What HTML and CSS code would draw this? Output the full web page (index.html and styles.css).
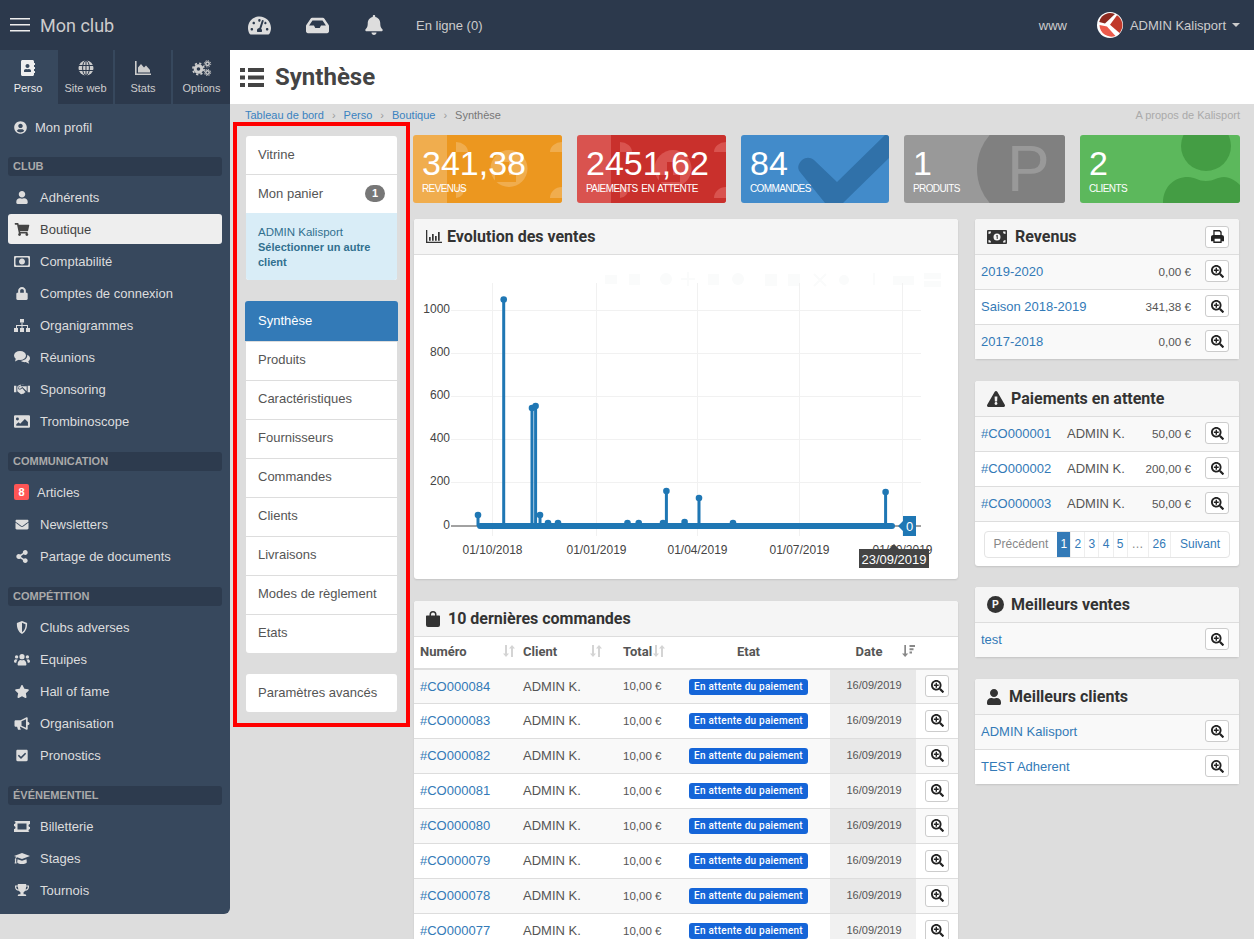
FILE: index.html
```html
<!doctype html>
<html lang="fr">
<head>
	<meta charset="utf-8">
	<title>Synthèse - Mon club</title>
	<link rel="stylesheet" href="styles.css">
</head>
<body>
	<svg class="sprite" aria-hidden="true">
		<symbol id="i-list" viewBox="0 0 24 19"><path d="M0 0h5v4H0zM8 0h16v4H8zM0 7.500h5v4H0zM8 7.500h16v4H8zM0 15h5v4H0zM8 15h16v4H8z"/></symbol>
		<symbol id="i-gauge" viewBox="0 0 576 512"><path d="M288 32C128.94 32 0 160.94 0 320c0 52.8 14.25 102.26 39.06 144.8 5.61 9.62 16.3 15.2 27.44 15.2h443c11.14 0 21.83-5.58 27.44-15.2C561.75 422.26 576 372.8 576 320c0-159.06-128.94-288-288-288zm0 64c14.71 0 26.58 10.13 30.32 23.65-1.11 2.26-2.64 4.23-3.45 6.67l-9.22 27.67c-5.13 3.49-10.97 6.01-17.64 6.01-17.67 0-32-14.33-32-32S270.33 96 288 96zM96 384c-17.67 0-32-14.33-32-32s14.33-32 32-32 32 14.33 32 32-14.33 32-32 32zm48-160c-17.67 0-32-14.33-32-32s14.33-32 32-32 32 14.33 32 32-14.33 32-32 32zm246.77-72.41l-61.33 184C343.13 347.33 352 364.54 352 384c0 11.72-3.38 22.55-8.88 32H232.88c-5.5-9.45-8.88-20.28-8.88-32 0-33.94 26.5-61.43 59.9-63.59l61.34-184.01c4.17-12.56 17.73-19.45 30.36-15.17 12.57 4.19 19.35 17.79 15.17 30.36zm14.66 57.2l15.52-46.55c3.47-1.29 7.13-2.23 11.05-2.23 17.67 0 32 14.33 32 32s-14.33 32-32 32c-11.38-.01-20.89-6.28-26.57-15.22zM480 384c-17.67 0-32-14.33-32-32s14.33-32 32-32 32 14.33 32 32-14.33 32-32 32z"/></symbol>
		<symbol id="i-inbox" viewBox="0 0 576 512"><path d="M567.938 243.908L462.25 85.374A48.003 48.003 0 0 0 422.311 64H153.689a48 48 0 0 0-39.938 21.374L8.062 243.908A47.994 47.994 0 0 0 0 270.533V400c0 26.51 21.49 48 48 48h480c26.51 0 48-21.49 48-48V270.533a47.994 47.994 0 0 0-8.062-26.625zM162.252 128h251.497l85.333 128H376l-32 64H232l-32-64H76.918l85.334-128z"/></symbol>
		<symbol id="i-bell" viewBox="0 0 448 512"><path d="M224 512c35.32 0 63.97-28.65 63.97-64H160.03c0 35.35 28.65 64 63.97 64zm215.39-149.71c-19.32-20.76-55.47-51.99-55.47-154.29 0-77.7-54.48-139.9-127.94-155.16V32c0-17.67-14.32-32-31.98-32s-31.98 14.33-31.98 32v20.84C118.56 68.1 64.08 130.3 64.08 208c0 102.3-36.15 133.53-55.47 154.29-6 6.45-8.66 14.16-8.61 21.71.11 16.4 12.98 32 32.1 32h383.8c19.12 0 32-15.6 32.1-32 .05-7.55-2.61-15.27-8.61-21.71z"/></symbol>
		<symbol id="i-book" viewBox="0 0 448 512"><path d="M436 160c6.6 0 12-5.4 12-12v-40c0-6.6-5.4-12-12-12h-20V48c0-26.5-21.5-48-48-48H48C21.5 0 0 21.5 0 48v416c0 26.5 21.5 48 48 48h320c26.5 0 48-21.5 48-48v-48h20c6.6 0 12-5.4 12-12v-40c0-6.6-5.4-12-12-12h-20v-64h20c6.6 0 12-5.4 12-12v-40c0-6.6-5.4-12-12-12h-20v-64h20zm-228-32c35.3 0 64 28.7 64 64s-28.7 64-64 64-64-28.7-64-64 28.7-64 64-64zm112 236.8c0 10.6-10 19.2-22.4 19.2H118.4C106 384 96 375.4 96 364.8v-19.2c0-31.8 30.1-57.6 67.2-57.6h5c12.3 5.1 25.7 8 39.8 8s27.6-2.9 39.8-8h5c37.1 0 67.2 25.8 67.2 57.6v19.2z"/></symbol>
		<symbol id="i-globe" viewBox="0 0 16 16"><circle cx="8" cy="8" r="7.5"/><g fill="none" stroke="#2c394c" stroke-width="1"><ellipse cx="8" cy="8" rx="3.4" ry="7.5"/><path d="M.5 5.500h15M.5 10.500h15M8 0v16"/></g></symbol>
		<symbol id="i-area" viewBox="0 0 16 14"><path d="M0 0h1.600v12.400H16V14H0z"/><path d="M3 11.400V6.500L6 3l3 3.500 2-2 4 4.500v2.400z"/></symbol>
		<symbol id="i-cogs" viewBox="0 0 20 16"><circle cx="7" cy="9" r="3.300" fill="none" stroke="currentColor" stroke-width="3"/><circle cx="7" cy="9" r="5.600" fill="none" stroke="currentColor" stroke-width="1.700" stroke-dasharray="2.200 2.200"/><circle cx="16" cy="3.800" r="1.700" fill="none" stroke="currentColor" stroke-width="1.500"/><circle cx="16" cy="3.800" r="3.200" fill="none" stroke="currentColor" stroke-width="1" stroke-dasharray="1.300 1.200"/><circle cx="16" cy="12.500" r="1.700" fill="none" stroke="currentColor" stroke-width="1.500"/><circle cx="16" cy="12.500" r="3.200" fill="none" stroke="currentColor" stroke-width="1" stroke-dasharray="1.300 1.200"/></symbol>
		<symbol id="i-user-circle" viewBox="0 0 496 512"><path d="M248 8C111 8 0 119 0 256s111 248 248 248 248-111 248-248S385 8 248 8zm0 96c48.6 0 88 39.4 88 88s-39.4 88-88 88-88-39.4-88-88 39.4-88 88-88zm0 344c-58.7 0-111.3-26.6-146.5-68.2 18.8-35.4 55.6-59.8 98.5-59.8 2.4 0 4.8.4 7.1 1.1 13 4.2 26.6 6.9 40.9 6.9 14.3 0 28-2.7 40.9-6.9 2.3-.7 4.7-1.1 7.1-1.1 42.9 0 79.7 24.4 98.5 59.8C359.3 421.4 306.7 448 248 448z"/></symbol>
		<symbol id="i-user" viewBox="0 0 448 512"><path d="M224 256c70.7 0 128-57.3 128-128S294.7 0 224 0 96 57.3 96 128s57.3 128 128 128zm89.6 32h-16.7c-22.2 10.2-46.9 16-72.9 16s-50.6-5.8-72.9-16h-16.7C60.2 288 0 348.2 0 422.4V464c0 26.5 21.5 48 48 48h352c26.5 0 48-21.5 48-48v-41.6c0-74.2-60.2-134.4-134.4-134.4z"/></symbol>
		<symbol id="i-cart" viewBox="0 0 576 512"><path d="M528.12 301.319l47.273-208C578.806 78.301 567.391 64 551.99 64H159.208l-9.166-44.81C147.758 8.021 137.93 0 126.529 0H24C10.745 0 0 10.745 0 24v16c0 13.255 10.745 24 24 24h69.883l70.248 343.435C147.325 417.1 136 435.222 136 456c0 30.928 25.072 56 56 56s56-25.072 56-56c0-15.674-6.447-29.835-16.824-40h209.647C430.447 426.165 424 440.326 424 456c0 30.928 25.072 56 56 56s56-25.072 56-56c0-22.172-12.888-41.332-31.579-50.405l5.517-24.276c3.413-15.018-8.002-29.319-23.403-29.319H218.117l-6.545-32h293.145c11.206 0 20.92-7.754 23.403-18.681z"/></symbol>
		<symbol id="i-money" viewBox="0 0 16 11"><path fill-rule="evenodd" d="M1 0h14a1 1 0 0 1 1 1v9a1 1 0 0 1-1 1H1a1 1 0 0 1-1-1V1a1 1 0 0 1 1-1zm1.200 1.500A1 1 0 0 1 1.500 2.600v5.800a1 1 0 0 1 .7 1.100h11.600a1 1 0 0 1 .7-1.100V2.600a1 1 0 0 1-.7-1.100zM8 2.400c1.700 0 3 1.400 3 3.100S9.700 8.600 8 8.600 5 7.200 5 5.500s1.300-3.100 3-3.100z"/><path d="M7.400 3.800h1.100v3.300h-.9V4.700l-.5.100z"/></symbol>
		<symbol id="i-bill" viewBox="0 0 20 14"><path fill-rule="evenodd" d="M1 0h18a1 1 0 0 1 1 1v12a1 1 0 0 1-1 1H1a1 1 0 0 1-1-1V1a1 1 0 0 1 1-1zm9 3.500a3.500 3.500 0 1 0 0 7 3.500 3.500 0 0 0 0-7zM1.500 1.500v2.500A2.500 2.500 0 0 0 4 1.500zM16 1.500A2.500 2.500 0 0 0 18.500 4V1.500zM1.500 10v2.500H4A2.500 2.500 0 0 0 1.500 10zM18.500 10A2.500 2.500 0 0 0 16 12.500h2.500z"/><path d="M9.500 5h1.200v4h-1V6.200l-.6.200z"/></symbol>
		<symbol id="i-lock" viewBox="0 0 448 512"><path d="M400 224h-24v-72C376 68.2 307.8 0 224 0S72 68.2 72 152v72H48c-26.5 0-48 21.5-48 48v192c0 26.5 21.5 48 48 48h352c26.5 0 48-21.5 48-48V272c0-26.5-21.5-48-48-48zm-104 0H152v-72c0-39.7 32.3-72 72-72s72 32.3 72 72v72z"/></symbol>
		<symbol id="i-sitemap" viewBox="0 0 16 13"><path d="M6 0h4v3.500H6zM0 9h4v4H0zM6 9h4v4H6zM12 9h4v4h-4z"/><path d="M7.500 3.500h1V6H14v3h-1V7H8.500v2h-1V7H3v2H2V6h5.500z"/></symbol>
		<symbol id="i-comments" viewBox="0 0 16 13"><ellipse cx="6" cy="4.500" rx="6" ry="4.500"/><path d="M2 7l-1 3.500L5 8.500z"/><path d="M13.300 3.700C15 4.500 16 5.900 16 7.300c0 1.200-.7 2.300-1.700 3l.9 2.400-3.500-1.600c-2 .2-4-.3-5.200-1.400 3.800 0 7.200-2.300 6.800-6z"/></symbol>
		<symbol id="i-handshake" viewBox="0 0 17 11"><path d="M0 1.500h2.500v7H0zM14.500 1.500H17v7h-2.500z"/><path d="M3.500 2l3-1.500h1.300L5.300 3.400c-.5.800.3 1.700 1.200 1.200l2.400-1.700 4.600 4.500V2l-2-1.500H7.800l1.100-.3 2.600.3L13.700 2zM3.500 2.300v5l3.600 3c.6.500 1.300.3 1.600-.2.500.3 1.200.1 1.400-.4.600.1 1.200-.3 1.200-.9.400 0 .8-.3.900-.7L8.800 4.100 6.900 5.400c-1.500.8-3-.8-2.200-2.100l.8-1z"/></symbol>
		<symbol id="i-image" viewBox="0 0 14 11"><path fill-rule="evenodd" d="M1 0h12a1 1 0 0 1 1 1v9a1 1 0 0 1-1 1H1a1 1 0 0 1-1-1V1a1 1 0 0 1 1-1zm2 2a1.300 1.300 0 1 0 0 2.600A1.300 1.300 0 0 0 3 2zM2 9.200h10.200V6L9.500 3.300 5.400 7.500 4 6.100 2 8z"/></symbol>
		<symbol id="i-envelope" viewBox="0 0 512 512"><path d="M502.3 190.8c3.900-3.100 9.700-.2 9.700 4.700V400c0 26.500-21.500 48-48 48H48c-26.500 0-48-21.500-48-48V195.600c0-5 5.700-7.800 9.700-4.700 22.400 17.400 52.100 39.500 154.100 113.600 21.100 15.400 56.700 47.800 92.200 47.600 35.700.3 72-32.800 92.300-47.600 102-74.100 131.600-96.300 154-113.700zM256 320c23.200.4 56.600-29.200 73.400-41.400 132.700-96.300 142.800-104.700 173.400-128.700 5.800-4.500 9.200-11.500 9.200-18.900v-19c0-26.500-21.500-48-48-48H48C21.500 64 0 85.500 0 112v19c0 7.400 3.400 14.300 9.200 18.900 30.600 23.900 40.700 32.400 173.400 128.700 16.800 12.200 50.200 41.800 73.400 41.400z"/></symbol>
		<symbol id="i-share" viewBox="0 0 448 512"><path d="M352 320c-22.608 0-43.387 7.819-59.790 20.895l-102.486-64.054a96.551 96.551 0 0 0 0-41.683l102.486-64.054C308.613 184.181 329.392 192 352 192c53.019 0 96-42.981 96-96S405.019 0 352 0s-96 42.981-96 96c0 7.158.79 14.130 2.276 20.841L155.790 180.895C139.387 167.819 118.608 160 96 160c-53.019 0-96 42.981-96 96s42.981 96 96 96c22.608 0 43.387-7.819 59.790-20.895l102.486 64.054A96.301 96.301 0 0 0 256 416c0 53.019 42.981 96 96 96s96-42.981 96-96-42.981-96-96-96z"/></symbol>
		<symbol id="i-shield" viewBox="0 0 12 14"><path fill-rule="evenodd" d="M6 0l5.500 2.200c.2 4.700-1.100 9.300-5.500 11.800C1.600 11.500.3 6.900.5 2.200zm0 1.900v10.200c3-1.900 3.900-5.200 3.800-8.700z"/></symbol>
		<symbol id="i-users" viewBox="0 0 16 12"><circle cx="8" cy="3.200" r="2.600"/><circle cx="2.600" cy="3.400" r="1.700"/><circle cx="13.400" cy="3.400" r="1.700"/><path d="M3.600 11c0-2.800 1.500-4.500 3-4.500.9.400 1.900.4 2.800 0 1.500 0 3 1.700 3 4.500 0 .6-.4 1-1 1h-6.800c-.6 0-1-.4-1-1zM0 8c0-1.200.7-2.300 1.800-2.300.7.300 1.400.3 1.800.2-.8.800-1.200 1.900-1.300 3.300H1c-.6 0-1-.5-1-1.200zM16 8c0-1.200-.7-2.300-1.800-2.300-.7.300-1.400.3-1.800.2.800.8 1.200 1.900 1.300 3.300H15c.6 0 1-.5 1-1.200z"/></symbol>
		<symbol id="i-star" viewBox="0 0 576 512"><path d="M259.300 17.800L194 150.200 47.900 171.500c-26.200 3.800-36.700 36.100-17.700 54.600l105.700 103-25 145.500c-4.500 26.300 23.200 46 46.400 33.700L288 439.600l130.700 68.700c23.200 12.200 50.900-7.400 46.400-33.700l-25-145.500 105.700-103c19-18.500 8.500-50.800-17.700-54.600L382 150.200 316.700 17.800c-11.700-23.600-45.600-23.900-57.400 0z"/></symbol>
		<symbol id="i-bullhorn" viewBox="0 0 15 13"><path d="M0 4.500C0 3.700.6 3.200 1.300 3.200H6L12 .3c.6-.3 1.200.1 1.200.7v3.700c1 .2 1.800.9 1.800 1.800s-.8 1.600-1.800 1.800v3.700c0 .6-.6 1-1.200.7L6 9.800H5.400l.9 3H3.500L2.600 9.800H1.300C.6 9.800 0 9.300 0 8.500zM7 4.300v4.400l4.500 2V2.300z"/></symbol>
		<symbol id="i-check" viewBox="0 0 448 512"><path d="M400 480H48c-26.510 0-48-21.490-48-48V80c0-26.510 21.490-48 48-48h352c26.510 0 48 21.490 48 48v352c0 26.510-21.490 48-48 48zm-204.686-98.059l184-184c6.248-6.248 6.248-16.379 0-22.627l-22.627-22.627c-6.248-6.248-16.379-6.249-22.628 0L184 302.745l-70.059-70.059c-6.248-6.248-16.379-6.248-22.628 0l-22.627 22.627c-6.248 6.248-6.248 16.379 0 22.627l104 104c6.249 6.250 16.379 6.250 22.628.001z"/></symbol>
		<symbol id="i-ticket" viewBox="0 0 16 11"><path fill-rule="evenodd" d="M0 0h16v3a1.500 1.500 0 0 0 0 3v0 2a1.500 1.500 0 0 0 0 3H0V8a1.500 1.500 0 0 0 0-3V3a1.500 1.500 0 0 0 0-3zm3.500 2.500v6h9v-6z"/></symbol>
		<symbol id="i-cap" viewBox="0 0 16 11"><path d="M8 0l8 3-8 3-5-1.800c-.6.500-.9 1.100-1 1.900.6.500.5 1.200.1 1.600l.5 2.900H.6l.5-2.900C.7 7.300.6 6.600 1.200 6.100c.1-.9.400-1.700 1-2.300L0 3z"/><path d="M3.500 6.200L8 7.800l4.500-1.600.3 3c0 .9-2.200 1.800-4.800 1.800S3.200 10.100 3.200 9.200z"/></symbol>
		<symbol id="i-trophy" viewBox="0 0 15 14"><path fill-rule="evenodd" d="M3 0h9v1.500h3v2c0 2-1.800 3.600-4 3.800-.5.700-1.100 1.200-1.800 1.500v2.200h1.300c.8 0 1.500.6 1.500 1.500v.5H3v-.5c0-.9.700-1.500 1.500-1.500h1.300V8.800C5.100 8.500 4.500 8 4 7.300c-2.200-.2-4-1.800-4-3.800v-2h3zM1.300 2.800v.7c0 1.100 1 2.100 2.300 2.400-.3-.9-.5-2-.6-3.100zm12.400 0H12c-.1 1.100-.3 2.200-.6 3.100 1.300-.3 2.300-1.300 2.300-2.400z"/></symbol>
		<symbol id="i-chart" viewBox="0 0 16 13"><path d="M0 0h1.300v11.700H16V13H0z"/><path d="M3 7h1.700v3.700H3zM6 4h1.700v6.700H6zM9 6h1.700v4.700H9zM12 2h1.700v8.700H12z"/></symbol>
		<symbol id="i-print" viewBox="0 0 14 14"><path fill-rule="evenodd" d="M2.500 0h7L11.500 2v3.500c1.400 0 2.500 1 2.500 2.200V12h-2.500v2h-9v-2H0V7.700c0-1.200 1.100-2.200 2.500-2.200zM3.900 1.500v4h6.200V2.600L9 1.500zM3.900 9.500v3h6.200v-3z"/></symbol>
		<symbol id="i-warning" viewBox="0 0 576 512"><path d="M569.517 440.013C587.975 472.007 564.806 512 527.940 512H48.054c-36.937 0-59.999-40.055-41.577-71.987L246.423 23.985c18.467-32.009 64.720-31.951 83.154 0l239.940 416.028zM288 354c-25.405 0-46 20.595-46 46s20.595 46 46 46 46-20.595 46-46-20.595-46-46-46zm-43.673-165.346l7.418 136c.347 6.364 5.609 11.346 11.982 11.346h48.546c6.373 0 11.635-4.982 11.982-11.346l7.418-136c.375-6.874-5.098-12.654-11.982-12.654h-63.383c-6.884 0-12.356 5.780-11.981 12.654z"/></symbol>
		<symbol id="i-bag" viewBox="0 0 14 16"><path fill-rule="evenodd" d="M3.500 4.500V3.500a3.500 3.500 0 0 1 7 0v1H13c.6 0 1 .4 1 1V14a2 2 0 0 1-2 2H2a2 2 0 0 1-2-2V5.500c0-.6.4-1 1-1zM5 4.500h4v-1a2 2 0 0 0-4 0z"/></symbol>
		<symbol id="i-zoom" viewBox="0 0 512 512"><path d="M304 192v32c0 6.600-5.400 12-12 12h-56v56c0 6.600-5.400 12-12 12h-32c-6.600 0-12-5.400-12-12v-56h-56c-6.600 0-12-5.400-12-12v-32c0-6.600 5.400-12 12-12h56v-56c0-6.600 5.400-12 12-12h32c6.600 0 12 5.400 12 12v56h56c6.600 0 12 5.400 12 12zm201 284.700L476.700 505c-9.400 9.400-24.600 9.400-33.900 0L343 405.300c-4.500-4.500-7-10.600-7-17V372c-35.300 27.600-79.700 44-128 44C93.100 416 0 322.900 0 208S93.100 0 208 0s208 93.100 208 208c0 48.300-16.400 92.700-44 128h16.300c6.400 0 12.500 2.500 17 7l99.700 99.700c9.300 9.400 9.300 24.600 0 34zM344 208c0-75.200-60.800-136-136-136S72 132.800 72 208s60.800 136 136 136 136-60.800 136-136z"/></symbol>
		<symbol id="i-sort" viewBox="0 0 12 12"><path d="M2 0h2v8.500h2L3 12 0 8.500h2zM8 12h2V3.500h2L9 0 6 3.500h2z"/></symbol>
		<symbol id="i-sort-desc" viewBox="0 0 13 12"><path d="M2.300 0h1.700v8.500h2.300L3.100 12 0 8.500h2.300zM7.500 0H13v2H7.500zM7.500 3.200h4v2h-4zM7.500 6.400h2.500v2H7.500z"/></symbol>
	</svg>

	<header class="topbar">
		<div class="brand">
			<svg class="brand-menu" viewBox="0 0 20 14"><path d="M0 0h20v1.600H0zM0 6h20v1.600H0zM0 12h20v1.600H0z"/></svg>
			<span class="brand-name">Mon club</span>
		</div>
		<nav class="top-nav">
			<svg class="top-icon gauge"><use href="#i-gauge"/></svg>
			<svg class="top-icon inbox"><use href="#i-inbox"/></svg>
			<svg class="top-icon bell"><use href="#i-bell"/></svg>
			<span class="online">En ligne (0)</span>
		</nav>
		<div class="top-right">
			<span class="www">www</span>
			<svg class="logo" viewBox="0 0 26 26">
				<circle cx="13" cy="13" r="13" fill="#fff"/>
				<path d="M5 4.500A12 12 0 0 1 18 2L8 11.500 2.200 10A12 12 0 0 1 5 4.500z" fill="#8e2a20"/>
				<path d="M20 3.200A12 12 0 0 1 22.500 21L13 12.800z" fill="#c0392b"/>
				<path d="M2.500 13l7.500 1.500 8.500 9.500A12 12 0 0 1 2.500 13z" fill="#ed5a4b"/>
			</svg>
			<span class="admin">ADMIN Kalisport</span>
			<span class="caret"></span>
		</div>
	</header>

	<div class="layout">
		<aside class="sidebar">
			<div class="tabs">
				<a class="tab active"><svg class="tab-icon"><use href="#i-book"/></svg>Perso</a>
				<a class="tab"><svg class="tab-icon"><use href="#i-globe"/></svg>Site web</a>
				<a class="tab"><svg class="tab-icon"><use href="#i-area"/></svg>Stats</a>
				<a class="tab"><svg class="tab-icon wide"><use href="#i-cogs"/></svg>Options</a>
			</div>
			<ul class="menu">
				<li class="item profil"><svg class="ico"><use href="#i-user-circle"/></svg>Mon profil</li>
			</ul>
			<h3 class="menu-head">CLUB</h3>
			<ul class="menu">
				<li class="item"><svg class="ico"><use href="#i-user"/></svg>Adhérents</li>
				<li class="item selected"><svg class="ico"><use href="#i-cart"/></svg>Boutique</li>
				<li class="item"><svg class="ico"><use href="#i-money"/></svg>Comptabilité</li>
				<li class="item"><svg class="ico"><use href="#i-lock"/></svg>Comptes de connexion</li>
				<li class="item"><svg class="ico"><use href="#i-sitemap"/></svg>Organigrammes</li>
				<li class="item"><svg class="ico"><use href="#i-comments"/></svg>Réunions</li>
				<li class="item"><svg class="ico"><use href="#i-handshake"/></svg>Sponsoring</li>
				<li class="item"><svg class="ico"><use href="#i-image"/></svg>Trombinoscope</li>
			</ul>
			<h3 class="menu-head">COMMUNICATION</h3>
			<ul class="menu">
				<li class="item articles"><span class="count">8</span>Articles</li>
				<li class="item"><svg class="ico"><use href="#i-envelope"/></svg>Newsletters</li>
				<li class="item"><svg class="ico"><use href="#i-share"/></svg>Partage de documents</li>
			</ul>
			<h3 class="menu-head">COMPÉTITION</h3>
			<ul class="menu">
				<li class="item"><svg class="ico"><use href="#i-shield"/></svg>Clubs adverses</li>
				<li class="item"><svg class="ico"><use href="#i-users"/></svg>Equipes</li>
				<li class="item"><svg class="ico"><use href="#i-star"/></svg>Hall of fame</li>
				<li class="item"><svg class="ico"><use href="#i-bullhorn"/></svg>Organisation</li>
				<li class="item"><svg class="ico"><use href="#i-check"/></svg>Pronostics</li>
			</ul>
			<h3 class="menu-head">ÉVÉNEMENTIEL</h3>
			<ul class="menu">
				<li class="item"><svg class="ico"><use href="#i-ticket"/></svg>Billetterie</li>
				<li class="item"><svg class="ico"><use href="#i-cap"/></svg>Stages</li>
				<li class="item"><svg class="ico"><use href="#i-trophy"/></svg>Tournois</li>
			</ul>
		</aside>

		<main class="main">
			<div class="page-title">
				<svg class="title-icon"><use href="#i-list"/></svg>
				<h1>Synthèse</h1>
			</div>
			<div class="crumbs">
				<a>Tableau de bord</a><i>›</i><a>Perso</a><i>›</i><a>Boutique</a><i>›</i><span>Synthèse</span>
				<span class="about">A propos de Kalisport</span>
			</div>
			<div class="content">
				<div class="shop-nav">
					<ul class="list">
						<li>Vitrine</li>
						<li class="panier">Mon panier <span class="pill">1</span></li>
						<li class="client"><span class="client-name">ADMIN Kalisport</span><br><b>Sélectionner un autre client</b></li>
					</ul>
					<ul class="list">
						<li class="on">Synthèse</li>
						<li>Produits</li>
						<li>Caractéristiques</li>
						<li>Fournisseurs</li>
						<li>Commandes</li>
						<li>Clients</li>
						<li>Livraisons</li>
						<li>Modes de règlement</li>
						<li>Etats</li>
					</ul>
					<ul class="list">
						<li>Paramètres avancés</li>
					</ul>
				</div>

				<div class="dash">
					<div class="stats">
						<div class="stat orange">
							<svg class="stat-bg" viewBox="0 0 149 68"><rect class="dk" x="34" width="115" height="68"/><circle class="lt" cx="96" cy="33.500" r="18.500"/><path class="dk" d="M90 27h6v13h7v7H82v-7h8z"/><path class="lt" d="M137 17a12 10 0 0 1 12-10v10zM149 52v11h-12a12 11 0 0 1 12-11zM43 7a12 10 0 0 1 12 10H43zM43 52h9a9 11 0 0 1-9 11z"/></svg>
							<div class="num">341,38</div><div class="lab">REVENUS</div>
						</div>
						<div class="stat red">
							<svg class="stat-bg" viewBox="0 0 149 68"><rect class="dk" x="34" width="115" height="68"/><circle class="lt" cx="96" cy="33.500" r="18.500"/><path class="dk" d="M90 27h6v13h7v7H82v-7h8z"/><path class="lt" d="M137 17a12 10 0 0 1 12-10v10zM149 52v11h-12a12 11 0 0 1 12-11zM43 7a12 10 0 0 1 12 10H43zM43 52h9a9 11 0 0 1-9 11z"/></svg>
							<div class="num">2451,62</div><div class="lab">PAIEMENTS EN ATTENTE</div>
						</div>
						<div class="stat blue">
							<svg class="stat-bg" viewBox="0 0 148 68"><path class="dk" d="M144 0L96 47 73 25c-4-3-8-3-12 0-4 4-5 8-2 12l25 31h18l46-45V0z"/></svg>
							<div class="num">84</div><div class="lab">COMMANDES</div>
						</div>
						<div class="stat grey">
							<svg class="stat-bg" viewBox="0 0 161 68"><circle class="dk" cx="125" cy="34" r="52"/><text x="103" y="56" class="stat-p">P</text></svg>
							<div class="num">1</div><div class="lab">PRODUITS</div>
						</div>
						<div class="stat green">
							<svg class="stat-bg" viewBox="0 0 160 68"><circle class="dk" cx="126" cy="11" r="25"/><path class="dk" d="M83 68c0-16 11-26 25-26 7 0 10 4 18 4s11-4 18-4c6 0 12 4 16 8v18z"/></svg>
							<div class="num">2</div><div class="lab">CLIENTS</div>
						</div>
					</div>

					<div class="columns">
						<div class="col-left">
							<section class="panel">
								<h2 class="panel-head"><svg class="head-icon"><use href="#i-chart"/></svg>Evolution des ventes</h2>
								<svg class="chart" viewBox="414 254 544 324">
									<g class="mode">
										<rect x="605" y="274" width="12" height="9"/><rect x="629" y="273" width="11" height="11"/><circle cx="666" cy="278" r="6"/><path d="M681 278h14M688 271v14" class="mode-line"/><rect x="708" y="273" width="11" height="11"/><circle cx="738" cy="278" r="6"/><rect x="765" y="273" width="12" height="12"/><rect x="788" y="273" width="12" height="12"/><path d="M814 273l12 12M826 273l-12 12" class="mode-line"/><circle cx="844" cy="279" r="5"/><path d="M874 272v12" class="mode-line"/><rect x="893" y="275" width="21" height="9"/><rect x="924" y="272" width="17" height="6"/><rect x="924" y="280" width="17" height="6"/>
									</g>
									<g class="grid">
										<path d="M451 309.500H921M451 352.500H921M451 395.500H921M451 438.500H921M451 481.500H921"/>
										<path d="M492.500 282V535M596.500 282V535M697.500 282V535M799.500 282V535M902.500 282V535"/>
									</g>
									<path class="zero" d="M451 525H921"/>
									<g class="spikes">
										<path d="M478 525V514M503.700 525V298M532 525V407M535.600 525V404M540 525V514M548 525V522M558 525V522M627.500 525V522M638.700 525V522M663 525V522M666.400 525V490M684.600 525V521M699 525V497M733 525V522M885.600 525V491"/>
									</g>
									<path class="base" d="M480 525H892"/>
									<g class="dots">
										<circle cx="478" cy="514" r="3.300"/><circle cx="503.700" cy="298.500" r="3.300"/><circle cx="532" cy="407" r="3.300"/><circle cx="535.600" cy="405" r="3.300"/><circle cx="540" cy="514" r="3.300"/><circle cx="548" cy="522" r="3.300"/><circle cx="558" cy="522" r="3.300"/><circle cx="627.500" cy="522" r="3.300"/><circle cx="638.700" cy="522" r="3.300"/><circle cx="663" cy="522" r="3.300"/><circle cx="666.400" cy="490" r="3.300"/><circle cx="684.600" cy="521" r="3.300"/><circle cx="699" cy="497" r="3.300"/><circle cx="733" cy="522" r="3.300"/><circle cx="885.600" cy="491" r="3.300"/>
									</g>
									<g class="y-labels">
										<text x="450" y="312">1000</text><text x="450" y="355">800</text><text x="450" y="398">600</text><text x="450" y="441">400</text><text x="450" y="484">200</text><text x="450" y="528">0</text>
									</g>
									<g class="x-labels">
										<text x="492.500" y="553">01/10/2018</text><text x="596.500" y="553">01/01/2019</text><text x="697.500" y="553">01/04/2019</text><text x="799.500" y="553">01/07/2019</text><text x="902.500" y="553">01/10/2019</text>
									</g>
									<path class="hover-box" d="M898 525l5-5v-5h13v20h-13v-5z"/>
									<text class="hover-val" x="909.500" y="530">0</text>
									<path class="tip" d="M859 548h30l5-5 5 5h30v19h-70z"/>
									<text class="tip-text" x="894" y="562.500">23/09/2019</text>
								</svg>
							</section>

							<section class="panel orders">
								<h2 class="panel-head"><svg class="head-icon bag"><use href="#i-bag"/></svg>10 dernières commandes</h2>
								<table class="orders-table">
									<colgroup><col class="c1"><col class="c2"><col class="c3"><col class="c4"><col class="c5"><col class="c6"></colgroup>
									<thead>
										<tr>
											<th>Numéro<svg class="sort s1"><use href="#i-sort"/></svg></th>
											<th>Client<svg class="sort s2"><use href="#i-sort"/></svg></th>
											<th>Total<svg class="sort s3"><use href="#i-sort"/></svg></th>
											<th class="etat-head">Etat</th>
											<th class="date-head">Date<svg class="sort s4"><use href="#i-sort-desc"/></svg></th>
											<th></th>
										</tr>
									</thead>
									<tbody>
										<tr><td><a>#CO000084</a></td><td>ADMIN K.</td><td class="small">10,00 €</td><td class="mid"><span class="state">En attente du paiement</span></td><td class="date">16/09/2019</td><td class="mid"><button class="btn"><svg><use href="#i-zoom"/></svg></button></td></tr>
										<tr><td><a>#CO000083</a></td><td>ADMIN K.</td><td class="small">10,00 €</td><td class="mid"><span class="state">En attente du paiement</span></td><td class="date">16/09/2019</td><td class="mid"><button class="btn"><svg><use href="#i-zoom"/></svg></button></td></tr>
										<tr><td><a>#CO000082</a></td><td>ADMIN K.</td><td class="small">10,00 €</td><td class="mid"><span class="state">En attente du paiement</span></td><td class="date">16/09/2019</td><td class="mid"><button class="btn"><svg><use href="#i-zoom"/></svg></button></td></tr>
										<tr><td><a>#CO000081</a></td><td>ADMIN K.</td><td class="small">10,00 €</td><td class="mid"><span class="state">En attente du paiement</span></td><td class="date">16/09/2019</td><td class="mid"><button class="btn"><svg><use href="#i-zoom"/></svg></button></td></tr>
										<tr><td><a>#CO000080</a></td><td>ADMIN K.</td><td class="small">10,00 €</td><td class="mid"><span class="state">En attente du paiement</span></td><td class="date">16/09/2019</td><td class="mid"><button class="btn"><svg><use href="#i-zoom"/></svg></button></td></tr>
										<tr><td><a>#CO000079</a></td><td>ADMIN K.</td><td class="small">10,00 €</td><td class="mid"><span class="state">En attente du paiement</span></td><td class="date">16/09/2019</td><td class="mid"><button class="btn"><svg><use href="#i-zoom"/></svg></button></td></tr>
										<tr><td><a>#CO000078</a></td><td>ADMIN K.</td><td class="small">10,00 €</td><td class="mid"><span class="state">En attente du paiement</span></td><td class="date">16/09/2019</td><td class="mid"><button class="btn"><svg><use href="#i-zoom"/></svg></button></td></tr>
										<tr><td><a>#CO000077</a></td><td>ADMIN K.</td><td class="small">10,00 €</td><td class="mid"><span class="state">En attente du paiement</span></td><td class="date">16/09/2019</td><td class="mid"><button class="btn"><svg><use href="#i-zoom"/></svg></button></td></tr>
									</tbody>
								</table>
							</section>
						</div>

						<div class="col-right">
							<section class="panel">
								<h2 class="panel-head side"><svg class="head-icon money"><use href="#i-bill"/></svg>Revenus<button class="btn head-btn"><svg><use href="#i-print"/></svg></button></h2>
								<div class="row"><a>2019-2020</a><span class="amount">0,00 €</span><button class="btn"><svg><use href="#i-zoom"/></svg></button></div>
								<div class="row"><a>Saison 2018-2019</a><span class="amount">341,38 €</span><button class="btn"><svg><use href="#i-zoom"/></svg></button></div>
								<div class="row"><a>2017-2018</a><span class="amount">0,00 €</span><button class="btn"><svg><use href="#i-zoom"/></svg></button></div>
							</section>
							<section class="panel pager-panel">
								<h2 class="panel-head side"><svg class="head-icon warn"><use href="#i-warning"/></svg>Paiements en attente</h2>
								<div class="row"><a class="code">#CO000001</a><span>ADMIN K.</span><span class="amount">50,00 €</span><button class="btn"><svg><use href="#i-zoom"/></svg></button></div>
								<div class="row"><a class="code">#CO000002</a><span>ADMIN K.</span><span class="amount">200,00 €</span><button class="btn"><svg><use href="#i-zoom"/></svg></button></div>
								<div class="row"><a class="code">#CO000003</a><span>ADMIN K.</span><span class="amount">50,00 €</span><button class="btn"><svg><use href="#i-zoom"/></svg></button></div>
								<div class="pager-wrap">
									<ul class="pager">
										<li class="edge off">Précédent</li><li class="cur">1</li><li>2</li><li>3</li><li>4</li><li>5</li><li class="off dots-page">…</li><li class="wide-page">26</li><li class="edge">Suivant</li>
									</ul>
								</div>
							</section>
							<section class="panel">
								<h2 class="panel-head side"><svg class="head-icon round" viewBox="0 0 16 16"><circle cx="8" cy="8" r="8"/><text x="8" y="11.500" class="round-p">P</text></svg>Meilleurs ventes</h2>
								<div class="row"><a>test</a><button class="btn push"><svg><use href="#i-zoom"/></svg></button></div>
							</section>
							<section class="panel">
								<h2 class="panel-head side"><svg class="head-icon person"><use href="#i-user"/></svg>Meilleurs clients</h2>
								<div class="row"><a>ADMIN Kalisport</a><button class="btn push"><svg><use href="#i-zoom"/></svg></button></div>
								<div class="row"><a>TEST Adherent</a><button class="btn push"><svg><use href="#i-zoom"/></svg></button></div>
							</section>
						</div>
					</div>
				</div>
			</div>
		</main>
	</div>
</body>
</html>
```

FILE: styles.css
```css
* { box-sizing: border-box; }
html, body { height: 939px; overflow: hidden; }
body {
	margin: 0;
	background: #ddd;
	color: #555;
	font-family: "Liberation Sans", Arial, sans-serif;
	font-size: 13px;
}
ul { list-style: none; margin: 0; padding: 0; }
a { color: #337ab7; }
svg { fill: currentColor; display: block; flex: none; }
.sprite { display: none; }

/* top bar */
.topbar {
	height: 50px;
	background: #2c394c;
	color: #ccc;
	display: flex;
	align-items: center;
}
.brand { width: 248px; padding-left: 10px; display: flex; align-items: center; }
.brand-menu { width: 20px; height: 14px; margin-right: 10px; color: #eee; }
.brand-name { font-family: Roboto, sans-serif; font-size: 18px; }
.top-nav { display: flex; align-items: center; }
.top-icon { color: #ddd; }
.gauge { width: 23px; height: 23px; }
.inbox { width: 23px; height: 23px; margin-left: 35px; }
.bell { width: 18px; height: 20px; margin-left: 36px; }
.online { margin-left: 33px; }
.top-right { margin-left: auto; display: flex; align-items: center; padding-right: 14px; }
.www { margin-right: 30px; }
.logo { width: 26px; height: 26px; margin-right: 7px; }
.caret {
	margin-left: 6px;
	border-top: 4px solid #ccc;
	border-left: 4px solid transparent;
	border-right: 4px solid transparent;
}

.layout { display: flex; align-items: flex-start; }

/* sidebar */
.sidebar {
	width: 230px;
	flex: none;
	background: #37485d;
	color: #ddd;
	padding-bottom: 7px;
	border-bottom-right-radius: 6px;
}
.tabs {
	display: grid;
	grid-template-columns: 56px 55px 56px 57px;
	gap: 2px;
	height: 54px;
	margin-bottom: 8px;
}
.tab {
	background: #2c394c;
	color: #ccc;
	font-size: 11px;
	display: flex;
	flex-direction: column;
	align-items: center;
	padding-top: 10px;
}
.tab.active { background: #37485d; color: #eee; }
.tab-icon { width: 16px; height: 16px; margin-bottom: 6px; }
.tab-icon.wide { width: 21px; }
.item {
	height: 30px;
	margin: 0 8px 2px;
	padding-left: 6px;
	border-radius: 3px;
	display: flex;
	align-items: center;
}
.ico { width: 16px; height: 13px; margin-right: 10px; }
.item.profil { margin-bottom: -1px; }
.profil .ico { width: 13px; margin-right: 8px; }
.selected { background: #eee; color: #444; }
.count {
	width: 15px;
	height: 16px;
	margin-right: 8px;
	background: #f55;
	color: #fff;
	border-radius: 2px;
	font-size: 11px;
	font-weight: bold;
	line-height: 16px;
	text-align: center;
}
.menu-head {
	height: 19px;
	margin: 16px 8px 6px;
	padding-left: 5px;
	background: #2d3b4e;
	border-radius: 3px;
	color: #aaa;
	font-size: 11px;
	line-height: 19px;
}

/* main */
.main { flex: 1; min-width: 0; }
.page-title {
	height: 54px;
	background: #fff;
	display: flex;
	align-items: center;
	padding-left: 10px;
	color: #444;
}
.title-icon { width: 24px; height: 19px; margin-right: 11px; }
h1 { margin: 0; font-family: Roboto, sans-serif; font-size: 24px; font-weight: 700; }
.crumbs {
	height: 18px;
	padding: 4px 14px 0 15px;
	display: flex;
	align-items: center;
	font-size: 11px;
	color: #777;
}
.crumbs a { color: #3a82c0; }
.crumbs i { font-style: normal; color: #999; margin: 0 8px; }
.about { margin-left: auto; color: #aaa; }
.content { display: flex; align-items: flex-start; padding-left: 3px; }

/* left shop menu, with the red frame */
.shop-nav {
	width: 177px;
	height: 605px;
	flex: none;
	border: 4px solid #f00;
	padding: 10px 9px 0;
}
.list { background: #fff; border-radius: 3px; margin-bottom: 21px; }
.list li {
	height: 39px;
	padding: 0 12px;
	line-height: 36px;
	border-top: 1px solid #ddd;
}
.list li:first-child { height: 38px; border-top: 0; line-height: 37px; border-radius: 3px 3px 0 0; }
.list .panier { display: flex; align-items: center; justify-content: space-between; padding-bottom: 1px; }
.pill {
	width: 20px;
	height: 17px;
	background: #777;
	color: #fff;
	border-radius: 9px;
	font-size: 11px;
	font-weight: bold;
	line-height: 17px;
	text-align: center;
}
.list .client {
	height: 67px;
	padding-top: 12px;
	background: #d9edf7;
	color: #31708f;
	line-height: 15px;
	font-size: 11px;
	border-top: 0;
	border-radius: 0 0 3px 3px;
}
.client-name { font-size: 11.500px; }
.list li.on {
	height: 40px;
	margin: 0 -1px;
	padding-left: 13px;
	background: #337ab7;
	color: #fff;
	line-height: 39px;
}

/* dashboard */
.dash { width: 827px; margin-left: 3px; padding-top: 13px; }
.stats {
	display: grid;
	grid-template-columns: 149fr 149fr 148fr 161fr 160fr;
	gap: 15px;
}
.stat {
	height: 68px;
	position: relative;
	overflow: hidden;
	border-radius: 3px;
	color: #fff;
	padding: 9px 9px 0;
}
.stat-bg { position: absolute; left: 0; top: 0; width: 100%; height: 100%; }
.num, .lab { position: relative; }
.num { font-size: 34px; line-height: 38px; }
.lab { font-size: 10px; letter-spacing: -.6px; word-spacing: 1.500px; line-height: 11px; margin-top: 1px; }
.orange { background: #f0ad4e; }
.orange .dk { fill: #ec971f; }
.orange .lt { fill: #f0ad4e; }
.red { background: #d9534f; }
.red .dk { fill: #c9302c; }
.red .lt { fill: #d9534f; }
.blue { background: #428bca; }
.blue .dk { fill: #3071a9; }
.grey { background: #999; }
.grey .dk { fill: #808080; }
.green { background: #5cb85c; }
.green .dk { fill: #449d44; }
.stat-p { font-family: "Liberation Sans", sans-serif; font-size: 64px; fill: #999; }

.columns { display: flex; gap: 17px; margin-top: 16px; padding-left: 1px; }
.col-left { width: 544px; flex: none; }
.col-right { width: 264px; flex: none; }
.panel {
	background: #fff;
	border-radius: 3px;
	box-shadow: 0 1px 2px rgba(0,0,0,.12);
	margin-bottom: 22px;
}
.pager-panel { margin-bottom: 21px; }
.panel-head {
	height: 36px;
	margin: 0;
	padding: 0 12px;
	background: #f5f5f5;
	border-bottom: 1px solid #ddd;
	border-radius: 3px 3px 0 0;
	color: #333;
	font-family: Roboto, sans-serif;
	font-size: 16px;
	font-weight: 700;
	display: flex;
	align-items: center;
}
.head-icon { width: 16px; height: 13px; margin-right: 5px; }
.bag { width: 14px; height: 16px; margin-right: 8px; }
.side .money { width: 20px; height: 14px; margin-right: 8px; }
.side .warn { width: 18px; height: 16px; margin-right: 6px; }
.side .round { width: 17px; height: 17px; margin-right: 7px; }
.side .person { width: 14px; height: 16px; margin-right: 8px; }
.round-p { font-family: Roboto, sans-serif; font-size: 10px; font-weight: 700; fill: #f5f5f5; text-anchor: middle; }
.chart { width: 544px; height: 324px; }
.mode rect, .mode circle { fill: #fafbfb; }
.mode-line { fill: none; stroke: #fafbfb; stroke-width: 2; }
.grid path { fill: none; stroke: #f1f1f1; stroke-width: 1; }
.zero { stroke: #444; stroke-width: 1; }
.spikes path { fill: none; stroke: #1f77b4; stroke-width: 3; }
.base { stroke: #1f77b4; stroke-width: 6; stroke-linecap: round; }
.dots circle { fill: #1f77b4; }
.y-labels text { font-size: 12px; fill: #444; text-anchor: end; }
.x-labels text { font-size: 12px; fill: #444; text-anchor: middle; }
.hover-box { fill: #1f77b4; }
.hover-val { font-size: 13px; fill: #fff; text-anchor: middle; }
.tip { fill: #444; }
.tip-text { font-size: 13px; fill: #fff; text-anchor: middle; }

/* orders table */
.orders-table { width: 544px; table-layout: fixed; border-collapse: collapse; font-size: 13px; }
.c1 { width: 103px; }
.c2 { width: 100px; }
.c3 { width: 50px; }
.c4 { width: 163px; }
.c5 { width: 86px; }
.c6 { width: 42px; }
.orders-table th {
	height: 32px;
	padding: 0 0 3px 6px;
	text-align: left;
	font-family: Roboto, sans-serif;
	font-size: 13px;
	font-weight: 700;
	color: #555;
	border-bottom: 2px solid #ddd;
	position: relative;
	white-space: nowrap;
}
.orders-table td {
	height: 35px;
	padding: 0 0 0 6px;
	border-top: 1px solid #ddd;
	white-space: nowrap;
}
.orders-table tbody tr:first-child td { border-top: 0; height: 34px; }
.orders-table tbody tr:nth-child(odd) { background: #f9f9f9; }
.orders-table td.mid { text-align: center; padding: 0; }
.orders-table th.etat-head { text-align: center; padding: 0 0 3px; }
.orders-table th.date-head { text-align: center; padding: 0 8px 3px 0; }
.orders-table .small { font-size: 11.500px; }
.orders-table .date { background: #f1f1f1; font-size: 11px; text-align: center; padding: 0 0 2px 2px; }
.orders-table tbody tr:nth-child(odd) .date { background: #e8e8e8; }
.sort { position: absolute; top: 8px; width: 12px; height: 12px; color: #d4d4d4; }
.s1 { left: 89px; }
.s2 { left: 73px; }
.s3 { left: 36px; }
.s4 { left: 72px; width: 13px; color: #888; }
.state {
	display: inline-block;
	width: 119px;
	height: 16px;
	background: #1565d8;
	color: #fff;
	border-radius: 3px;
	font-family: Roboto, sans-serif;
	font-size: 10px;
	font-weight: 500;
	letter-spacing: .25px;
	line-height: 16px;
	text-align: center;
	vertical-align: middle;
}

/* small buttons and right hand rows */
.btn {
	width: 24px;
	height: 22px;
	padding: 0;
	background: #fff;
	border: 1px solid #ccc;
	border-radius: 3px;
	color: #222;
	display: inline-flex;
	align-items: center;
	justify-content: center;
	vertical-align: middle;
}
.btn svg { width: 13px; height: 13px; }
.head-btn { margin-left: auto; margin-right: -2px; }
.row {
	height: 35px;
	padding: 0 10px 2px 6px;
	border-top: 1px solid #ddd;
	display: flex;
	align-items: center;
	background: #fff;
}
.panel-head + .row { border-top: 0; height: 34px; }
.row:nth-of-type(odd), .panel-head + .row { background: #f9f9f9; }
.row:nth-of-type(2) { background: #fff; }
.code { width: 86px; }
.amount { margin-left: auto; margin-right: 14px; font-size: 11.700px; }
.push { margin-left: auto; }
.pager-wrap { border-top: 1px solid #ddd; padding: 9px; height: 45px; display: flex; justify-content: flex-end; }
.pager {
	display: flex;
	height: 27px;
	border: 1px solid #e4e4e4;
	border-radius: 4px;
	font-size: 12px;
	line-height: 25px;
	color: #337ab7;
}
.pager li { padding: 0 3.200px; border-left: 1px solid #eee; text-align: center; }
.pager li:first-child { border-left: 0; }
.pager .edge { padding: 0 9px; }
.pager .dots-page, .pager .wide-page { padding: 0 4px; }
.pager .off { color: #888; }
.pager .cur { background: #337ab7; color: #fff; border-left: 0; }
```
